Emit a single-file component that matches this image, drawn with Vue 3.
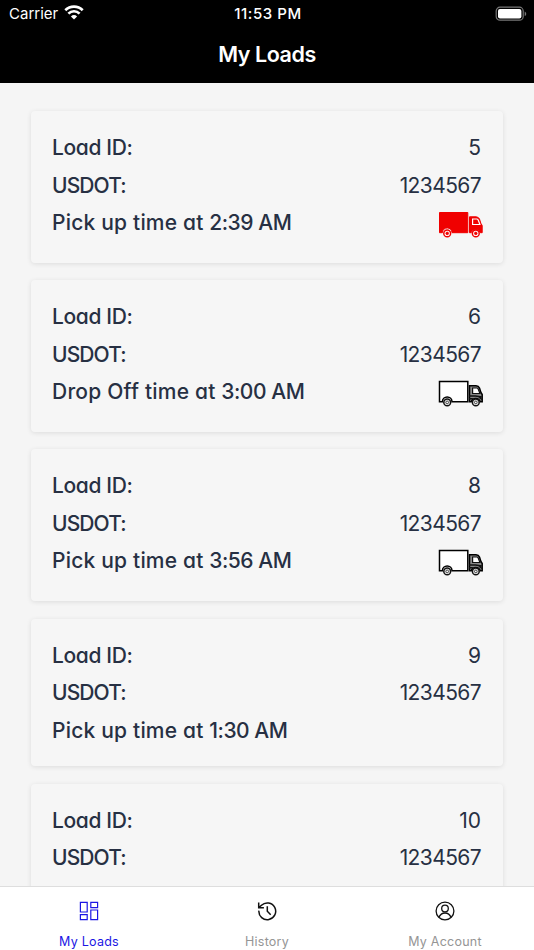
<script setup>
const loads = [
  { id: '5', action: 'Pick up time at', time: '2:39 AM', truck: 'active', kind: 'pick' },
  { id: '6', action: 'Drop Off time at', time: '3:00 AM', truck: 'idle', kind: 'drop' },
  { id: '8', action: 'Pick up time at', time: '3:56 AM', truck: 'idle', kind: 'pick' },
  { id: '9', action: 'Pick up time at', time: '1:30 AM', truck: '', kind: 'pick' },
  { id: '10', action: '', time: '', truck: '', kind: 'pick' },
]
</script>

<template>
  <div class="screen">
    <header class="top">
      <div class="status">
        <div class="carrier">
          <span>Carrier</span>
          <svg class="wifi" viewBox="0 0 20 15" width="20" height="15">
            <path d="M1.3 5.2a12.4 12.4 0 0 1 17.4 0M4.4 8.6a7.9 7.9 0 0 1 11.2 0" fill="none" stroke="#fff" stroke-width="2.7" />
            <path d="M6.9 11.5a4.5 4.5 0 0 1 6.2 0L10 14.6z" fill="#fff" />
          </svg>
        </div>
        <div class="clock">11:53 PM</div>
        <div class="power">
          <svg viewBox="0 0 32 16" width="32" height="16">
            <rect x="1.2" y="1.2" width="27" height="13" rx="3.8" fill="none" stroke="#777" stroke-width="1.2" />
            <rect x="3" y="3" width="23.4" height="9.4" rx="2" fill="#fff" />
            <path d="M29.7 5.4c2 .8 2 3.9 0 4.7z" fill="#777" />
          </svg>
        </div>
      </div>
      <h1>My Loads</h1>
    </header>

    <main class="list">
      <article v-for="load in loads" :key="load.id" class="card">
        <div class="row">
          <span class="label id">Load ID:</span>
          <span class="value">{{ load.id }}</span>
        </div>
        <div class="row">
          <span class="label dot">USDOT:</span>
          <span class="value number">1234567</span>
        </div>
        <div class="row" :class="{ tall: load.truck }">
          <span v-if="load.action" class="label"><span :class="load.kind">{{ load.action }}</span>{{ ' ' }}<span class="time">{{ load.time }}</span></span>
          <svg v-if="load.truck" class="truck" :class="load.truck" viewBox="0 0 46 28" width="46" height="28">
            <path class="box" d="M1.5 1.5H29.8V21.700H14a4.800 4.800 0 0 0-9.600 0H1.500z" />
            <path class="cab" d="M31.500 5.800h6.500q2.600.2 3.500 2.200l1.300 4.200 1.400 2.300V21.700h-1.900a4.800 4.800 0 0 0-9.100 0h-1.700z" />
            <path class="window" d="M34.600 8h4.300q1 .2 1.500 1.500l1.500 4h-7.300z" />
            <path class="trim" d="M31.300 15.900h6.200l6.300 1M31.300 18.800h3.600M40.800 17l3.200 2.500" />
            <circle class="tyre" cx="9.200" cy="22.400" r="3.400" />
            <circle class="hub" cx="9.200" cy="22.400" r="1.300" />
            <circle class="tyre" cx="37.800" cy="22.400" r="3.400" />
            <circle class="hub" cx="37.800" cy="22.400" r="1.300" />
          </svg>
        </div>
      </article>
    </main>

    <nav class="tabs">
      <a class="tab current">
        <svg viewBox="0 0 20 20" width="20" height="20" fill="none" stroke="currentColor" stroke-width="1.2">
          <path d="M1.400 1.400h6.800v9.600H1.400zM11.800 1.400h6.800v5.200h-6.800zM1.400 13.600h6.800v5H1.400zM11.800 9h6.800v9.600h-6.800z" />
        </svg>
        <span class="name">My Loads</span>
      </a>
      <a class="tab">
        <svg viewBox="0 0 20 20" width="20" height="20" fill="none" stroke="#111" stroke-width="1.5">
          <path d="M1.900 9.600A8.400 8.400 0 1 0 4.500 4.200L2.200 6.300M1.700 1.600v5.200h5.200M10.300 5.300v5l3.400 3.400" />
        </svg>
        <span class="name">History</span>
      </a>
      <a class="tab">
        <svg viewBox="0 0 20 20" width="20" height="20" fill="none" stroke="#111" stroke-width="1.3">
          <circle cx="10" cy="10" r="8.9" />
          <circle cx="10" cy="7.5" r="3.3" />
          <path d="M4 16.300c1.200-3 3.200-4.300 6-4.300s4.800 1.300 6 4.300" />
        </svg>
        <span class="name">My Account</span>
      </a>
    </nav>
  </div>
</template>

<style>
body {
  margin: 0;
  overflow: hidden;
}
</style>

<style scoped>
.screen {
  display: flex;
  flex-direction: column;
  width: 534px;
  height: 950px;
  overflow: hidden;
  background: #f5f5f5;
  font-family: Inter, "Liberation Sans", sans-serif;
}
.top {
  flex: none;
  height: 83px;
  background: #000;
  color: #fff;
}
.status {
  display: grid;
  grid-template-columns: 1fr auto 1fr;
  align-items: center;
  height: 27px;
  padding: 0 7px 0 9px;
  font-size: 15px;
}
.carrier {
  display: flex;
  align-items: center;
  gap: 6px;
}
.wifi {
  margin-top: -2px;
}
.clock {
  font-weight: 500;
  letter-spacing: 0.55px;
}
.power {
  display: flex;
  justify-content: flex-end;
}
h1 {
  margin: 13px 0 0;
  font-size: 21.5px;
  line-height: 28px;
  font-weight: 600;
  letter-spacing: -0.45px;
  text-align: center;
}
.list {
  flex: 1;
  min-height: 0;
  overflow: hidden;
  display: flex;
  flex-direction: column;
  gap: 17.6px;
  padding: 28.3px 31px 0;
}
.card {
  flex: none;
  padding: 18px 22px 17px 21px;
  border-radius: 4px;
  background: #f6f6f6;
  box-shadow: 0 1px 5px rgba(0, 0, 0, 0.1);
  color: #273043;
  font-size: 21px;
  font-feature-settings: "cv11";
}
.row {
  display: flex;
  justify-content: space-between;
  height: 37.5px;
  line-height: 37.5px;
  white-space: nowrap;
}
.row.tall {
  height: 41.5px;
}
.label {
  font-weight: 500;
}
.id {
  letter-spacing: -0.35px;
}
.dot {
  letter-spacing: -0.9px;
}
.pick {
  letter-spacing: 0.2px;
}
.drop {
  letter-spacing: 0.22px;
}
.time {
  letter-spacing: -0.45px;
}
.number {
  letter-spacing: -0.6px;
}
.truck {
  margin: 6.5px -2.5px 0 0;
}
.box,
.cab {
  fill: #fff;
  stroke: #000;
  stroke-width: 1.5;
}
.cab {
  fill: #888;
}
.window {
  fill: #fff;
  stroke: #111;
  stroke-width: 1.2;
}
.trim {
  fill: none;
  stroke: #111;
  stroke-width: 1.5;
}
.tyre {
  fill: #ddd;
  stroke: #111;
  stroke-width: 1.5;
}
.hub {
  fill: #fff;
  stroke: #222;
  stroke-width: 0.8;
}
.active .box,
.active .cab {
  fill: #f00000;
  stroke: #f00000;
  stroke-width: 1;
}
.active .window {
  fill: #f00000;
  stroke: #fff;
}
.active .trim {
  display: none;
}
.active .tyre {
  fill: #fff;
  stroke: #f00000;
}
.active .hub {
  fill: #f00000;
  stroke: #f00000;
}
.tabs {
  flex: none;
  display: grid;
  grid-template-columns: repeat(3, 1fr);
  box-sizing: border-box;
  height: 64px;
  border-top: 1px solid #dedede;
  background: #fff;
}
.tab {
  display: flex;
  flex-direction: column;
  align-items: center;
  gap: 13px;
  padding-top: 13.5px;
  color: #959595;
  font-size: 12.5px;
  line-height: 16px;
}
.tab svg {
  flex: none;
}
.current {
  color: #1c16e4;
}
.name {
  letter-spacing: 0.25px;
}
</style>
